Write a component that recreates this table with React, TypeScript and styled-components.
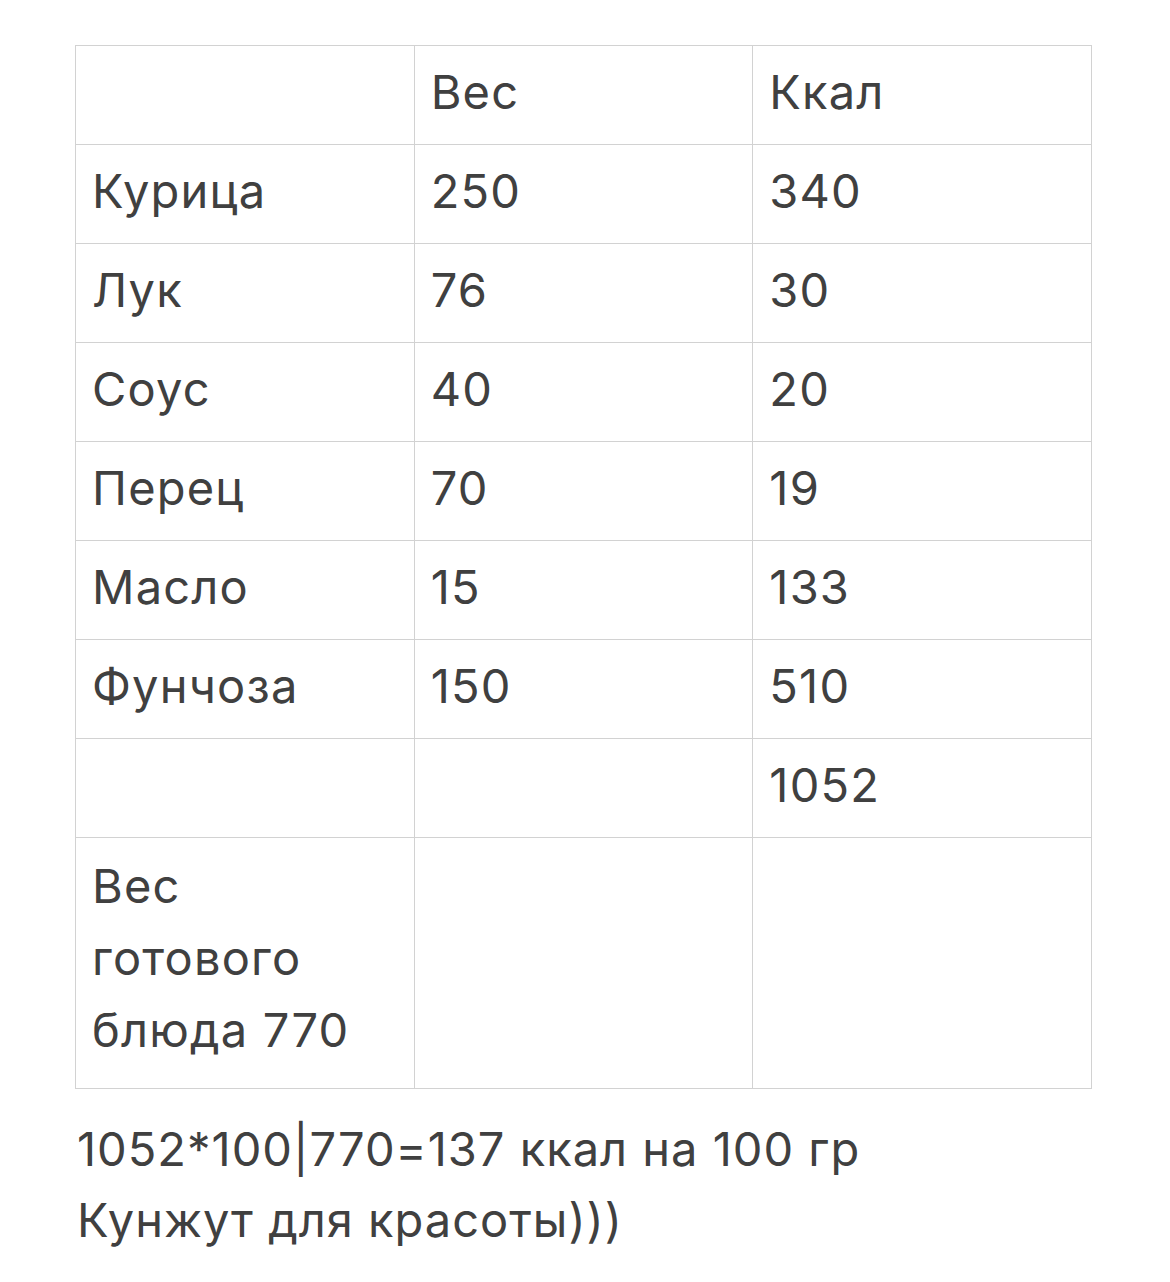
import React from "react";
import styled, { createGlobalStyle } from "styled-components";

const Global = createGlobalStyle`
  html, body { margin: 0; padding: 0; background: #ffffff; }
  body { font-family: Inter, "Liberation Sans", sans-serif; color: #404040; }
`;

const Page = styled.div`
  width: 1170px;
  box-sizing: border-box;
  padding: 45px 78px 0 75px;
`;

const Table = styled.table`
  width: 1017px;
  border-collapse: collapse;
  table-layout: fixed;
`;

const Cell = styled.td<{ $tall?: boolean }>`
  border: 1px solid #d2d2d2;
  padding: ${(p) => (p.$tall ? "12px 16px 22px" : "10px 16px 16px")};
  font-size: 47px;
  line-height: 72px;
  letter-spacing: 1.2px;
  font-weight: 400;
  color: #404040;
  vertical-align: top;
  text-align: left;
`;

const Note = styled.p`
  margin: 24px 0 0 2px;
  font-size: 47px;
  line-height: 71px;
  color: #404040;
  letter-spacing: 1px;
`;

const rows: [string, string, string][] = [
  ["", "Вес", "Ккал"],
  ["Курица", "250", "340"],
  ["Лук", "76", "30"],
  ["Соус", "40", "20"],
  ["Перец", "70", "19"],
  ["Масло", "15", "133"],
  ["Фунчоза", "150", "510"],
  ["", "", "1052"],
];

export default function App() {
  return (
    <Page>
      <Global />
      <Table>
        <tbody>
          {rows.map((r, i) => (
            <tr key={i}>
              {r.map((c, j) => (
                <Cell key={j}>{c || "\u00a0"}</Cell>
              ))}
            </tr>
          ))}
          <tr>
            <Cell $tall>Вес готового блюда 770</Cell>
            <Cell $tall />
            <Cell $tall />
          </tr>
        </tbody>
      </Table>
      <Note>
        1052*100|770=137 ккал на 100 гр
        <br />
        Кунжут для красоты)))
      </Note>
    </Page>
  );
}
